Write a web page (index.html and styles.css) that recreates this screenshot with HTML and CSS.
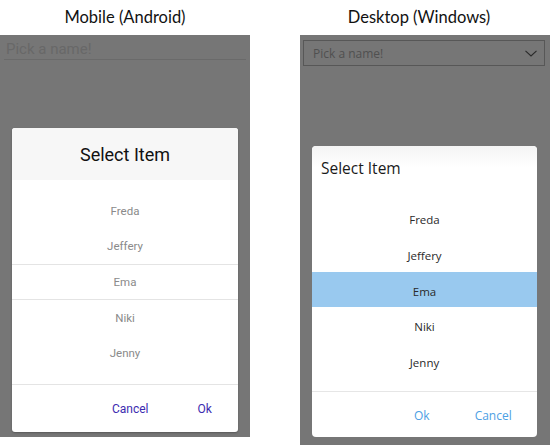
FILE: index.html
```html
<!DOCTYPE html>
<html>
<head>
<meta charset="utf-8">
<link rel="stylesheet" href="styles.css">
</head>
<body>
<div class="page">
  <div class="caption caption-left">Mobile (Android)</div>
  <div class="spacer"></div>
  <div class="caption caption-right">Desktop (Windows)</div>

  <div class="panel panel-android">
    <div class="a-entry">Pick a name!</div>
    <div class="a-dialog">
      <div class="a-head">Select Item</div>
      <div class="a-list">
        <div class="a-item">Freda</div>
        <div class="a-item a-sep-after">Jeffery</div>
        <div class="a-item a-sep-after">Ema</div>
        <div class="a-item">Niki</div>
        <div class="a-item">Jenny</div>
      </div>
      <div class="a-foot">
        <span class="a-btn a-cancel">Cancel</span>
        <span class="a-btn a-ok">Ok</span>
      </div>
    </div>
  </div>
  <div class="spacer"></div>
  <div class="panel panel-win">
    <div class="w-combo">
      <span>Pick a name!</span>
      <svg class="w-chev" width="12" height="7" viewBox="0 0 12 7"><path d="M0.5 0.8 L6 6 L11.5 0.8" fill="none" stroke="#2a2a2a" stroke-width="1.1"/></svg>
    </div>
    <div class="w-dialog">
      <div class="w-head">Select Item</div>
      <div class="w-list">
        <div class="w-item">Freda</div>
        <div class="w-item">Jeffery</div>
        <div class="w-item w-selected">Ema</div>
        <div class="w-item">Niki</div>
        <div class="w-item">Jenny</div>
      </div>
      <div class="w-foot">
        <span class="w-btn w-ok">Ok</span>
        <span class="w-btn w-cancel">Cancel</span>
      </div>
    </div>
  </div>
</div>
</body>
</html>
```
FILE: styles.css
```css
html, body { margin: 0; padding: 0; background: #fff; }
.page {
  width: 550px;
  height: 445px;
  display: grid;
  grid-template-columns: 250px 50px 250px;
  grid-template-rows: 35px 410px;
  overflow: hidden;
}
.caption {
  font-family: Lato, "Liberation Sans", sans-serif;
  font-size: 16.5px;
  color: #111;
  display: flex;
  align-items: center;
  justify-content: center;
  padding-bottom: 1px;
}
.caption-right { padding-right: 12px; }
.panel { background: #767676; }
.panel-android {
  height: 402px;
  display: flex;
  flex-direction: column;
}
.a-entry {
  font-family: Roboto, sans-serif;
  font-size: 15px;
  color: #686868;
  margin: 0 4px;
  padding: 5px 2px 0 2px;
  height: 19px;
  border-bottom: 1px solid #6a6a6a;
}
.a-dialog {
  margin: 68px 12px 0 12px;
  height: 304px;
  background: #fff;
  border-radius: 3px;
  overflow: hidden;
  display: flex;
  flex-direction: column;
  font-family: Roboto, sans-serif;
  box-shadow: 0 1px 2px rgba(0,0,0,0.25);
}
.a-head {
  height: 52px;
  background: #f7f7f7;
  display: flex;
  align-items: center;
  justify-content: center;
  font-size: 18px;
  color: #111;
}
.a-list {
  padding: 13.5px 0 13px 0;
  border-bottom: 1px solid #e4e4e4;
}
.a-item {
  height: 35.5px;
  display: flex;
  align-items: center;
  justify-content: center;
  font-size: 11.5px;
  color: #8a8a8a;
  box-sizing: border-box;
}
.a-sep-after { border-bottom: 1px solid #e4e4e4; }
.a-foot {
  flex: 1;
  display: flex;
  align-items: center;
  font-size: 12px;
  color: #3c2bb0;
}
.a-cancel { margin-left: 100px; }
.a-ok { margin-left: 49px; }

.panel-win {
  display: flex;
  flex-direction: column;
  font-family: "Open Sans", "Noto Sans", sans-serif;
}
.w-combo {
  margin: 5px 5px 0 3px;
  height: 24px;
  border: 1px solid #575757;
  display: flex;
  align-items: center;
  justify-content: space-between;
  padding: 0 7px 0 9px;
  font-size: 12px;
  color: #505050;
}
.w-chev { margin-top: 1px; }
.w-dialog {
  margin: 80px 13px 0 12px;
  height: 291px;
  background: #fff;
  border-radius: 4px;
  overflow: hidden;
  display: flex;
  flex-direction: column;
}
.w-head {
  height: 54px;
  background: linear-gradient(#f4f4f4, #fff 40%);
  padding: 11px 0 0 9px;
  box-sizing: border-box;
  font-size: 15.5px;
  color: #1a1a1a;
}
.w-list {
  padding-bottom: 12px;
  border-bottom: 1px solid #e6e6e6;
}
.w-item {
  height: 36px;
  display: flex;
  align-items: center;
  justify-content: center;
  font-size: 11.5px;
  color: #2a2a2a;
  padding-top: 3px;
  box-sizing: border-box;
}
.w-item.w-selected { background: #99c9ef; height: 35px; }
.w-foot {
  flex: 1;
  display: flex;
  align-items: center;
  font-size: 12px;
  color: #4da0e4;
  padding-top: 2px;
}
.w-ok { margin-left: 102px; }
.w-cancel { margin-left: 45px; }
```
